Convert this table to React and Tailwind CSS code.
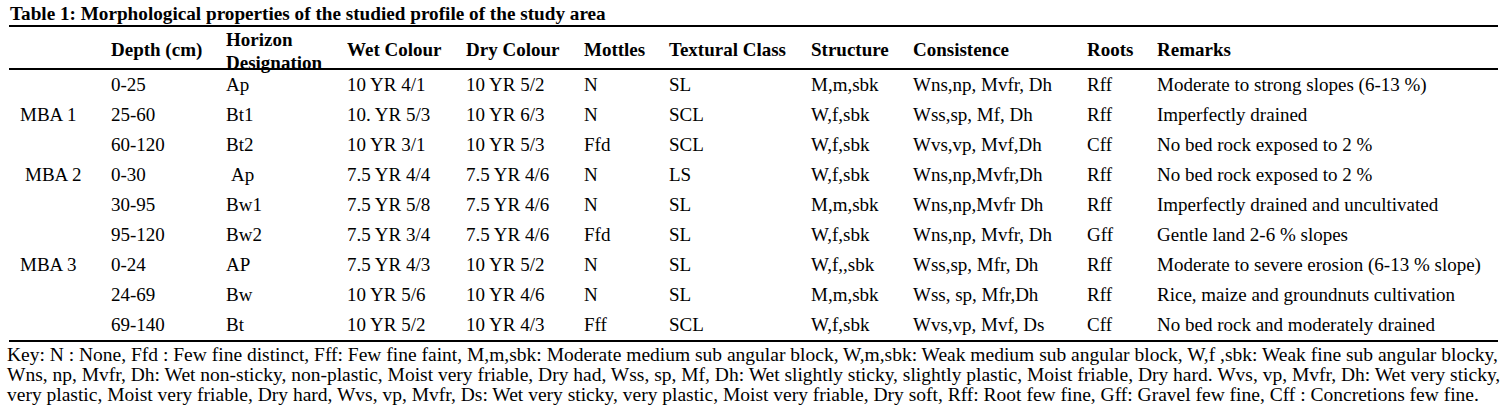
import React from "react";

const rows = [
  ["", "0-25", "Ap", "10 YR 4/1", "10 YR 5/2", "N", "SL", "M,m,sbk", "Wns,np, Mvfr, Dh", "Rff", "Moderate to strong slopes (6-13 %)"],
  ["MBA 1", "25-60", "Bt1", "10. YR 5/3", "10 YR 6/3", "N", "SCL", "W,f,sbk", "Wss,sp, Mf, Dh", "Rff", "Imperfectly drained"],
  ["", "60-120", "Bt2", "10 YR 3/1", "10 YR 5/3", "Ffd", "SCL", "W,f,sbk", "Wvs,vp, Mvf,Dh", "Cff", "No bed rock exposed to 2 %"],
  ["MBA 2", "0-30", "Ap", "7.5 YR 4/4", "7.5 YR 4/6", "N", "LS", "W,f,sbk", "Wns,np,Mvfr,Dh", "Rff", "No bed rock exposed to 2 %"],
  ["", "30-95", "Bw1", "7.5 YR 5/8", "7.5 YR 4/6", "N", "SL", "M,m,sbk", "Wns,np,Mvfr Dh", "Rff", "Imperfectly drained and uncultivated"],
  ["", "95-120", "Bw2", "7.5 YR 3/4", "7.5 YR 4/6", "Ffd", "SL", "W,f,sbk", "Wns,np, Mvfr, Dh", "Gff", "Gentle land 2-6 % slopes"],
  ["MBA 3", "0-24", "AP", "7.5 YR 4/3", "10 YR 5/2", "N", "SL", "W,f,,sbk", "Wss,sp, Mfr, Dh", "Rff", "Moderate to severe erosion (6-13 % slope)"],
  ["", "24-69", "Bw", "10 YR 5/6", "10 YR 4/6", "N", "SL", "M,m,sbk", "Wss, sp, Mfr,Dh", "Rff", "Rice, maize and groundnuts cultivation"],
  ["", "69-140", "Bt", "10 YR 5/2", "10 YR 4/3", "Fff", "SCL", "W,f,sbk", "Wvs,vp, Mvf, Ds", "Cff", "No bed rock and moderately drained"],
];

const cols = "grid grid-cols-[102px_115px_121px_119px_118px_85px_142px_102px_174px_70px_341px]";

export default function App() {
  return (
    <div className="w-[1505px] h-[419px] bg-white text-black font-['Liberation_Serif',serif] overflow-hidden">
      <div className="pl-[10px] pt-[4px] text-[19.2px] leading-[20px] font-bold">
        Table 1: Morphological properties of the studied profile of the study area
      </div>
      <div className="ml-[9px] w-[1489px] mt-[1px]">
        <div className={`${cols} h-[45px] border-t-2 border-b-2 border-black font-bold text-[19px]`}>
          <div />
          <div className="flex items-center">Depth (cm)</div>
          <div className="flex flex-col justify-center leading-[23px] pt-[1px]">
            <span>Horizon</span>
            <span>Designation</span>
          </div>
          <div className="flex items-center">Wet Colour</div>
          <div className="flex items-center">Dry Colour</div>
          <div className="flex items-center">Mottles</div>
          <div className="flex items-center">Textural Class</div>
          <div className="flex items-center">Structure</div>
          <div className="flex items-center">Consistence</div>
          <div className="flex items-center">Roots</div>
          <div className="flex items-center">Remarks</div>
        </div>
        <div className="border-b-2 border-black text-[19px] leading-[22px]">
          {rows.map((r, i) => (
            <div key={i} className={`${cols} h-[30px] items-center`}>
              <div className={i === 3 ? "pl-[16px]" : "pl-[11px]"}>{r[0]}</div>
              <div>{r[1]}</div>
              <div className={i === 3 ? "pl-[5px]" : ""}>{r[2]}</div>
              {r.slice(3).map((c, j) => (
                <div key={j} className="whitespace-nowrap">{c}</div>
              ))}
            </div>
          ))}
        </div>
      </div>
      <div className="pl-[7px] pt-[3px] text-[19.5px] leading-[20px] whitespace-nowrap">
        <p>Key: N : None, Ffd : Few fine distinct, Fff: Few fine faint, M,m,sbk: Moderate medium sub angular block, W,m,sbk: Weak medium sub angular block, W,f ,sbk: Weak fine sub angular blocky,</p>
        <p>Wns, np, Mvfr, Dh: Wet non-sticky, non-plastic, Moist very friable, Dry had, Wss, sp, Mf, Dh: Wet slightly sticky, slightly plastic, Moist friable, Dry hard. Wvs, vp, Mvfr, Dh: Wet very sticky,</p>
        <p>very plastic, Moist very friable, Dry hard, Wvs, vp, Mvfr, Ds: Wet very sticky, very plastic, Moist very friable, Dry soft, Rff: Root few fine, Gff: Gravel few fine, Cff : Concretions few fine.</p>
      </div>
    </div>
  );
}
